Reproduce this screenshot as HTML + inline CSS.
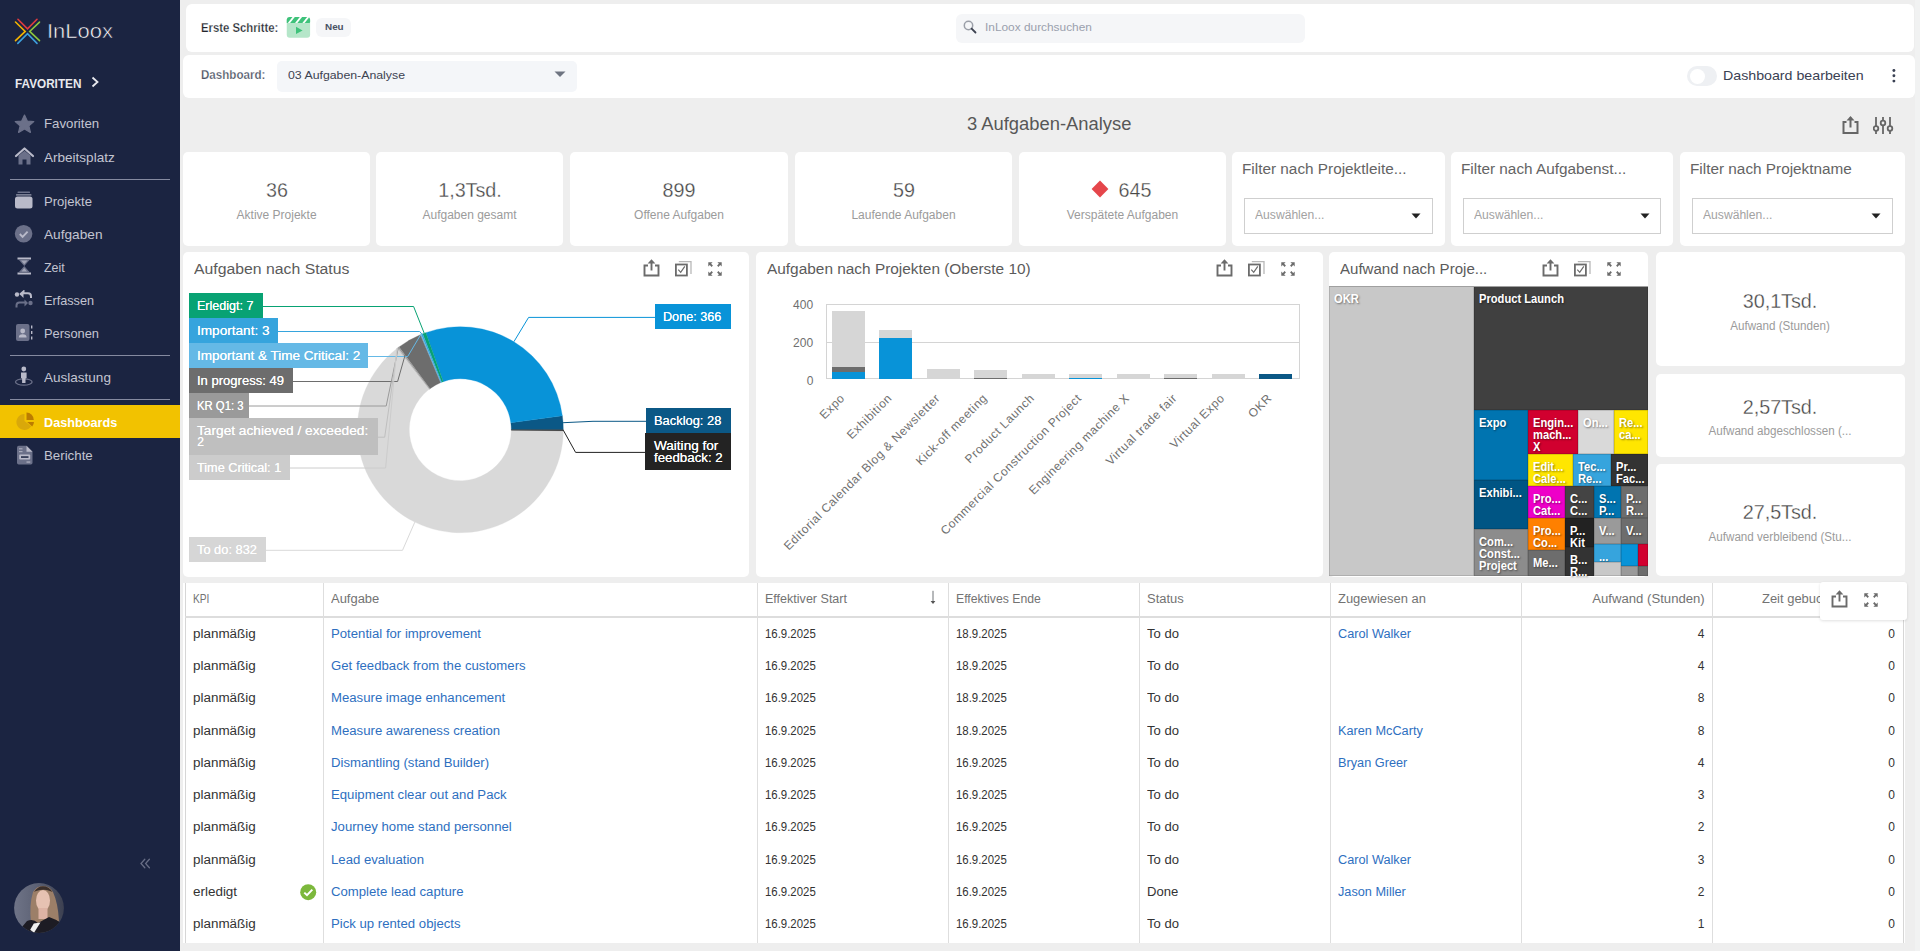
<!DOCTYPE html>
<html><head><meta charset="utf-8"><title>InLoox Dashboard</title>
<style>html,body{margin:0;padding:0;width:1920px;height:951px;overflow:hidden;background:#eeeeee;font-family:"Liberation Sans",sans-serif;}</style>
</head><body>
<div style="position:absolute;left:0px;top:0px;width:180px;height:951px;background:#1b2441;"></div>
<svg style="position:absolute;left:10px;top:14px;" width="36" height="36" viewBox="0 0 36 36"><g fill="none" stroke-width="1.6" stroke-linecap="round"><polyline points="7.95,5.3 17.5,14.8 27,5.3" stroke="#e23b3f"/><polyline points="5.5,8 15.2,17.4 5.5,26.7" stroke="#f4b400"/><polyline points="29.5,8.1 19.7,17.4 29.5,26.7" stroke="#8cc63e"/><polyline points="7.8,29.4 17.5,19.7 27,29.4" stroke="#3d9fdc"/></g></svg>
<div style="position:absolute;top:21.89px;font-family:'Liberation Sans', sans-serif;font-size:19.5px;line-height:19.5px;color:#ffffff;white-space:nowrap;left:46.5px;transform-origin:0 50%;transform:scaleX(1.1273);-webkit-text-stroke:0.55px #1b2441;">InLoox</div>
<div style="position:absolute;top:76.60px;font-family:'Liberation Sans', sans-serif;font-size:13px;line-height:13px;color:#e8e9ee;white-space:nowrap;font-weight:700;left:15px;transform-origin:0 50%;transform:scaleX(0.9042);">FAVORITEN</div>
<svg style="position:absolute;left:89px;top:76px;" width="12" height="12" viewBox="0 0 12 12"><polyline points="3.5,1.5 8.5,6 3.5,10.5" fill="none" stroke="#e8e9ee" stroke-width="1.8"/></svg>
<div style="position:absolute;top:117.30px;font-family:'Liberation Sans', sans-serif;font-size:13px;line-height:13px;color:#c3c5d1;white-space:nowrap;left:44.2px;transform-origin:0 50%;transform:scaleX(1.0186);">Favoriten</div>
<div style="position:absolute;top:150.50px;font-family:'Liberation Sans', sans-serif;font-size:13px;line-height:13px;color:#c3c5d1;white-space:nowrap;left:44.2px;transform-origin:0 50%;transform:scaleX(1.0409);">Arbeitsplatz</div>
<div style="position:absolute;top:195.00px;font-family:'Liberation Sans', sans-serif;font-size:13px;line-height:13px;color:#c3c5d1;white-space:nowrap;left:44.2px;transform-origin:0 50%;transform:scaleX(1.0065);">Projekte</div>
<div style="position:absolute;top:228.00px;font-family:'Liberation Sans', sans-serif;font-size:13px;line-height:13px;color:#c3c5d1;white-space:nowrap;left:44.2px;transform-origin:0 50%;transform:scaleX(1.0509);">Aufgaben</div>
<div style="position:absolute;top:261.30px;font-family:'Liberation Sans', sans-serif;font-size:13px;line-height:13px;color:#c3c5d1;white-space:nowrap;left:44.2px;transform-origin:0 50%;transform:scaleX(0.9552);">Zeit</div>
<div style="position:absolute;top:294.00px;font-family:'Liberation Sans', sans-serif;font-size:13px;line-height:13px;color:#c3c5d1;white-space:nowrap;left:44.2px;transform-origin:0 50%;transform:scaleX(0.9746);">Erfassen</div>
<div style="position:absolute;top:327.00px;font-family:'Liberation Sans', sans-serif;font-size:13px;line-height:13px;color:#c3c5d1;white-space:nowrap;left:44.2px;transform-origin:0 50%;transform:scaleX(0.9883);">Personen</div>
<div style="position:absolute;top:371.00px;font-family:'Liberation Sans', sans-serif;font-size:13px;line-height:13px;color:#c3c5d1;white-space:nowrap;left:44.2px;transform-origin:0 50%;transform:scaleX(1.0401);">Auslastung</div>
<div style="position:absolute;top:449.00px;font-family:'Liberation Sans', sans-serif;font-size:13px;line-height:13px;color:#c3c5d1;white-space:nowrap;left:44.2px;transform-origin:0 50%;transform:scaleX(1.0211);">Berichte</div>
<div style="position:absolute;left:10px;top:179px;width:160px;height:1px;background:#858aa0;"></div>
<div style="position:absolute;left:10px;top:355px;width:160px;height:1px;background:#858aa0;"></div>
<div style="position:absolute;left:10px;top:399px;width:160px;height:1px;background:#858aa0;"></div>
<div style="position:absolute;left:0px;top:405px;width:180px;height:33px;background:#f2c200;"></div>
<div style="position:absolute;top:415.50px;font-family:'Liberation Sans', sans-serif;font-size:13px;line-height:13px;color:#ffffff;white-space:nowrap;font-weight:700;left:44.2px;transform-origin:0 50%;transform:scaleX(0.9743);">Dashboards</div>
<svg style="position:absolute;left:14px;top:114px;" width="21" height="20" viewBox="0 0 21 20"><polygon points="10.5,1 13.3,7 19.8,7.6 14.9,11.9 16.4,18.4 10.5,15 4.6,18.4 6.1,11.9 1.2,7.6 7.7,7" fill="#6b7089" stroke="#6b7089" stroke-width="1.2" stroke-linejoin="round"/></svg>
<svg style="position:absolute;left:14px;top:147px;" width="21" height="19" viewBox="0 0 21 19"><path d="M2 9 L10.5 1.5 L19 9" fill="none" stroke="#b9bac9" stroke-width="2.2" stroke-linecap="round" stroke-linejoin="round"/><path d="M4.5 8.5 L10.5 3.8 L16.5 8.5 V17.5 H12.5 V12.5 H8.5 V17.5 H4.5 Z" fill="#6b7089"/></svg>
<svg style="position:absolute;left:14px;top:190px;" width="21" height="21" viewBox="0 0 21 21"><rect x="3.5" y="1.5" width="12.5" height="1.6" rx=".6" fill="#6b7089"/><rect x="2" y="4.3" width="15.5" height="1.2" rx=".5" fill="#b9bac9" opacity=".8"/><rect x="1" y="6.5" width="17.5" height="12" rx="2.5" fill="#b9bac9"/></svg>
<svg style="position:absolute;left:14px;top:224px;" width="21" height="20" viewBox="0 0 21 20"><circle cx="9.6" cy="9.8" r="8.8" fill="#6b7089"/><polyline points="5.8,10 8.6,12.8 13.6,7.6" fill="none" stroke="#b9bac9" stroke-width="1.9"/></svg>
<svg style="position:absolute;left:16px;top:257px;" width="18" height="19" viewBox="0 0 18 19"><rect x="1.5" y="0.5" width="13.5" height="2" fill="#b9bac9"/><rect x="1.5" y="15.5" width="13.5" height="2" fill="#b9bac9"/><path d="M3 3 H13.5 L8.25 9 Z M3 15 H13.5 L8.25 9 Z" fill="#6b7089"/><path d="M5 3.5 H11.5 L8.25 7.2 Z M5.5 14.5 H11 L8.25 11 Z" fill="#b9bac9" opacity=".7"/></svg>
<svg style="position:absolute;left:14px;top:290px;" width="20" height="20" viewBox="0 0 20 20"><circle cx="3" cy="4.5" r="2.2" fill="#b9bac9"/><path d="M6 4.5 L9.5 1.5 V3.3 H14 Q17 3.3 17 6.5 V8" fill="none" stroke="#b9bac9" stroke-width="2"/><path d="M9.5 1 L6 4.5 L9.5 8 Z" fill="#b9bac9"/><circle cx="16.5" cy="13" r="2.2" fill="#6b7089"/><path d="M2.5 17.5 V15.5 Q2.5 12.5 5.5 12.5 H11" fill="none" stroke="#6b7089" stroke-width="2"/><path d="M10.5 9.5 L14 13 L10.5 16.5 Z" fill="#6b7089"/></svg>
<svg style="position:absolute;left:15px;top:323px;" width="19" height="20" viewBox="0 0 19 20"><rect x="1" y="1" width="13.5" height="17" rx="2" fill="#6b7089"/><circle cx="7.7" cy="8" r="2.4" fill="#b9bac9"/><path d="M3.8 14.5 Q3.8 11.2 7.7 11.2 Q11.6 11.2 11.6 14.5 Z" fill="#b9bac9"/><rect x="16" y="2.5" width="1.4" height="3" fill="#b9bac9"/><rect x="16" y="8" width="1.4" height="3" fill="#b9bac9"/><rect x="16" y="13.5" width="1.4" height="3" fill="#b9bac9"/></svg>
<svg style="position:absolute;left:14px;top:366px;" width="20" height="21" viewBox="0 0 20 21"><ellipse cx="9.8" cy="16" rx="8.3" ry="3.2" fill="none" stroke="#6b7089" stroke-width="1.3"/><circle cx="9.8" cy="3" r="2.4" fill="#b9bac9"/><path d="M7 6.5 H12.6 V12 L11.5 12.5 V17 H8.1 V12.5 L7 12 Z" fill="#b9bac9"/></svg>
<svg style="position:absolute;left:15px;top:411px;" width="21" height="20" viewBox="0 0 21 20"><path d="M9.5 3 A8 8 0 1 0 16.2 15.2 L9.5 10 Z" fill="#d9a80a"/><path d="M11.5 1.5 A7.5 7.5 0 0 1 18.8 9 H11.5 Z" fill="#bb7c00"/><path d="M12.2 11 H19 A7.5 7.5 0 0 1 17.2 15.5 Z" fill="#bb7c00"/></svg>
<svg style="position:absolute;left:16px;top:445px;" width="18" height="21" viewBox="0 0 18 21"><path d="M1 2.5 Q1 0.8 2.7 0.8 H10.5 L16.5 6.8 V17.8 Q16.5 19.5 14.8 19.5 H2.7 Q1 19.5 1 17.8 Z" fill="#6b7089"/><path d="M10.5 0.8 L16.5 6.8 H10.5 Z" fill="#b9bac9"/><rect x="3" y="3.2" width="3.5" height="1.2" fill="#b9bac9" opacity=".8"/><rect x="3" y="6" width="3.5" height="1.2" fill="#b9bac9" opacity=".8"/><rect x="3.2" y="9.5" width="11" height="5" rx="1" fill="#b9bac9"/><rect x="5" y="11.3" width="7.5" height="1.5" fill="#1b2441"/><rect x="10.5" y="16.5" width="3.8" height="1.1" fill="#b9bac9"/></svg>
<svg style="position:absolute;left:138px;top:857px;" width="14" height="13" viewBox="0 0 14 13"><g fill="none" stroke="#676d85" stroke-width="1.3" stroke-linecap="round"><polyline points="6.8,2.3 3,6.5 6.8,10.7"/><polyline points="11.4,2.3 7.6,6.5 11.4,10.7"/></g></svg>
<svg style="position:absolute;left:14px;top:883px;" width="50" height="50" viewBox="0 0 50 50"><defs><clipPath id="av"><circle cx="25" cy="25" r="24.9"/></clipPath><linearGradient id="avg" x1="0" y1="0" x2="1" y2="0"><stop offset="0" stop-color="#6f7487"/><stop offset="0.45" stop-color="#5d6275"/><stop offset="1" stop-color="#3c4050"/></linearGradient></defs><g clip-path="url(#av)"><rect width="50" height="50" fill="url(#avg)"/><path d="M17 40 Q15 22 19 9 Q23 2.5 29 3 Q36 3 39 9 Q44 20 45 38 L38 40 L20 42 Z" fill="#9c7f68"/><path d="M20 9 Q24 3 29 3.2 Q35 3.2 38.5 9 L36 8 Q30 5.5 22 8 Z" fill="#3b2f2a"/><ellipse cx="29" cy="17.5" rx="7" ry="10.5" fill="#e6c2b2"/><rect x="24.5" y="25" width="9" height="11" fill="#ddb3a4"/><path d="M8 44 L13 38 Q19 35 24 40 L35 34 Q42 36 48 41 L50 50 L6 50 Z" fill="#1d1c24"/><polygon points="16.2,46.7 19.8,40.4 26.5,39.5 20,49.8" fill="#f0f0f0"/></g></svg>
<div style="position:absolute;left:186px;top:4px;width:1728px;height:47.5px;background:#ffffff;border-radius:6px;"></div>
<div style="position:absolute;top:21.84px;font-family:'Liberation Sans', sans-serif;font-size:12px;line-height:12px;color:#22252d;white-space:nowrap;font-weight:700;left:200.7px;transform-origin:0 50%;transform:scaleX(0.9424);-webkit-text-stroke:0.25px #fff;">Erste Schritte:</div>
<svg style="position:absolute;left:286px;top:16px;" width="26" height="23" viewBox="0 0 26 23"><defs><clipPath id="cl"><path d="M0.75 4 Q0.75 1 3.75 1 H21.1 Q24.1 1 24.1 4 V18.7 Q24.1 21.7 21.1 21.7 H3.75 Q0.75 21.7 0.75 18.7 Z"/></clipPath></defs><g clip-path="url(#cl)"><rect x="0" y="0" width="26" height="23" fill="#b5e6c9"/><rect x="0" y="0" width="26" height="6.9" fill="#ffffff"/><polygon points="1.50,1 6.50,1 1.75,6.9 -3.25,6.9" fill="#3ec27a"/><polygon points="8.80,1 13.80,1 9.05,6.9 4.05,6.9" fill="#3ec27a"/><polygon points="16.10,1 21.10,1 16.35,6.9 11.35,6.9" fill="#3ec27a"/><polygon points="23.40,1 28.40,1 23.65,6.9 18.65,6.9" fill="#3ec27a"/></g><polygon points="10,10.8 16.6,14.4 10,18" fill="#3ec27a"/></svg>
<div style="position:absolute;left:316.4px;top:18.1px;width:34.9px;height:18.6px;background:#f5f6f8;border-radius:6px;"></div>
<div style="position:absolute;top:22.30px;font-family:'Liberation Sans', sans-serif;font-size:9.8px;line-height:9.8px;color:#4a5265;white-space:nowrap;font-weight:700;left:324.75px;transform-origin:0 50%;transform:scaleX(1.0073);">Neu</div>
<div style="position:absolute;left:955.5px;top:13.5px;width:349.5px;height:29px;background:#f5f6f8;border-radius:6px;"></div>
<svg style="position:absolute;left:963px;top:20px;" width="14" height="14" viewBox="0 0 14 14"><circle cx="5.5" cy="5.5" r="4.2" fill="none" stroke="#9b9fa8" stroke-width="1.5"/><line x1="8.6" y1="8.6" x2="12.5" y2="12.5" stroke="#3d4250" stroke-width="1.8" stroke-linecap="round"/></svg>
<div style="position:absolute;top:21.99px;font-family:'Liberation Sans', sans-serif;font-size:11px;line-height:11px;color:#9aa0ad;white-space:nowrap;left:985px;transform-origin:0 50%;transform:scaleX(1.0790);">InLoox durchsuchen</div>
<div style="position:absolute;left:1915px;top:0px;width:5px;height:951px;background:#f1f2f2;"></div>
<div style="position:absolute;left:183.3px;top:55px;width:1731.5px;height:42.5px;background:#ffffff;border-radius:6px;"></div>
<div style="position:absolute;top:69.14px;font-family:'Liberation Sans', sans-serif;font-size:12px;line-height:12px;color:#4b5263;white-space:nowrap;font-weight:700;left:200.7px;transform-origin:0 50%;transform:scaleX(0.9659);-webkit-text-stroke:0.25px #fff;">Dashboard:</div>
<div style="position:absolute;left:277px;top:61px;width:300px;height:30.5px;background:#f4f6f9;border-radius:5px;"></div>
<div style="position:absolute;top:69.97px;font-family:'Liberation Sans', sans-serif;font-size:11.5px;line-height:11.5px;color:#3d4352;white-space:nowrap;left:288px;transform-origin:0 50%;transform:scaleX(1.0701);">03 Aufgaben-Analyse</div>
<svg style="position:absolute;left:554px;top:71px;" width="12" height="7" viewBox="0 0 12 7"><polygon points="0.5,0.5 11.5,0.5 6,6" fill="#6e7481"/></svg>
<div style="position:absolute;left:1687px;top:66.3px;width:30px;height:19.5px;background:#eef0f3;border-radius:10px;"></div>
<div style="position:absolute;left:1689.5px;top:68.5px;width:15px;height:15px;background:#ffffff;border-radius:50%;"></div>
<div style="position:absolute;top:69.00px;font-family:'Liberation Sans', sans-serif;font-size:13px;line-height:13px;color:#3a4153;white-space:nowrap;left:1723.4px;transform-origin:0 50%;transform:scaleX(1.0929);">Dashboard bearbeiten</div>
<svg style="position:absolute;left:1890px;top:66px;" width="8" height="20" viewBox="0 0 8 20"><g fill="#3a4153"><circle cx="3.9" cy="4.5" r="1.45"/><circle cx="3.9" cy="9.8" r="1.45"/><circle cx="3.9" cy="15.1" r="1.45"/></g></svg>
<div style="position:absolute;top:115.79px;font-family:'Liberation Sans', sans-serif;font-size:17.5px;line-height:17.5px;color:#575757;white-space:nowrap;left:966.6px;transform-origin:0 50%;transform:scaleX(1.0495);">3 Aufgaben-Analyse</div>
<svg style="position:absolute;left:1841px;top:115px;" width="20" height="20" viewBox="0 0 20 20"><path d="M5.5 7 H2.5 V18 H16.5 V7 H13.5" fill="none" stroke="#666" stroke-width="2"/><line x1="9.5" y1="2.5" x2="9.5" y2="12.5" stroke="#666" stroke-width="2"/><polygon points="9.5,1 5.5,5.5 13.5,5.5" fill="#666"/></svg>
<svg style="position:absolute;left:1873px;top:116px;" width="21" height="19" viewBox="0 0 21 19"><g stroke="#666" stroke-width="1.8" fill="#eeeeee"><line x1="3" y1="1" x2="3" y2="18"/><line x1="10" y1="1" x2="10" y2="18"/><line x1="17" y1="1" x2="17" y2="18"/><circle cx="3" cy="12.5" r="2.3"/><circle cx="10" cy="7" r="2.3"/><circle cx="17" cy="12.5" r="2.3"/></g></svg>
<div style="position:absolute;left:183.2px;top:152px;width:186.8px;height:93.5px;background:#ffffff;border-radius:5px;"></div>
<div style="position:absolute;top:179.22px;font-family:'Liberation Sans', sans-serif;font-size:21px;line-height:21px;color:#474747;white-space:nowrap;left:276.6px;transform:translateX(-50%) scaleX(0.9400);-webkit-text-stroke:0.3px #fff;">36</div>
<div style="position:absolute;top:208.84px;font-family:'Liberation Sans', sans-serif;font-size:12px;line-height:12px;color:#9b9b9b;white-space:nowrap;left:276.6px;transform:translateX(-50%);">Aktive Projekte</div>
<div style="position:absolute;left:376px;top:152px;width:187px;height:93.5px;background:#ffffff;border-radius:5px;"></div>
<div style="position:absolute;top:179.22px;font-family:'Liberation Sans', sans-serif;font-size:21px;line-height:21px;color:#474747;white-space:nowrap;left:469.5px;transform:translateX(-50%) scaleX(0.9400);-webkit-text-stroke:0.3px #fff;">1,3Tsd.</div>
<div style="position:absolute;top:208.84px;font-family:'Liberation Sans', sans-serif;font-size:12px;line-height:12px;color:#9b9b9b;white-space:nowrap;left:469.5px;transform:translateX(-50%);">Aufgaben gesamt</div>
<div style="position:absolute;left:570px;top:152px;width:218px;height:93.5px;background:#ffffff;border-radius:5px;"></div>
<div style="position:absolute;top:179.22px;font-family:'Liberation Sans', sans-serif;font-size:21px;line-height:21px;color:#474747;white-space:nowrap;left:679.0px;transform:translateX(-50%) scaleX(0.9400);-webkit-text-stroke:0.3px #fff;">899</div>
<div style="position:absolute;top:208.84px;font-family:'Liberation Sans', sans-serif;font-size:12px;line-height:12px;color:#9b9b9b;white-space:nowrap;left:679.0px;transform:translateX(-50%);">Offene Aufgaben</div>
<div style="position:absolute;left:795px;top:152px;width:217px;height:93.5px;background:#ffffff;border-radius:5px;"></div>
<div style="position:absolute;top:179.22px;font-family:'Liberation Sans', sans-serif;font-size:21px;line-height:21px;color:#474747;white-space:nowrap;left:903.5px;transform:translateX(-50%) scaleX(0.9400);-webkit-text-stroke:0.3px #fff;">59</div>
<div style="position:absolute;top:208.84px;font-family:'Liberation Sans', sans-serif;font-size:12px;line-height:12px;color:#9b9b9b;white-space:nowrap;left:903.5px;transform:translateX(-50%);">Laufende Aufgaben</div>
<div style="position:absolute;left:1019px;top:152px;width:207px;height:93.5px;background:#ffffff;border-radius:5px;"></div>
<div style="position:absolute;top:179.22px;font-family:'Liberation Sans', sans-serif;font-size:21px;line-height:21px;color:#474747;white-space:nowrap;left:1134.8px;transform:translateX(-50%) scaleX(0.9400);-webkit-text-stroke:0.3px #fff;">645</div>
<svg style="position:absolute;left:1091px;top:180px;" width="18" height="18" viewBox="0 0 18 18"><polygon points="9,0.6 17.4,9 9,17.4 0.6,9" fill="#e5464b"/></svg>
<div style="position:absolute;top:208.84px;font-family:'Liberation Sans', sans-serif;font-size:12px;line-height:12px;color:#9b9b9b;white-space:nowrap;left:1122.5px;transform:translateX(-50%);">Verspätete Aufgaben</div>
<div style="position:absolute;left:1232px;top:152.2px;width:212.70000000000005px;height:93.8px;background:#ffffff;border-radius:5px;"></div>
<div style="position:absolute;top:162.15px;font-family:'Liberation Sans', sans-serif;font-size:14px;line-height:14px;color:#646464;white-space:nowrap;left:1242px;transform-origin:0 50%;transform:scaleX(1.0950);">Filter nach Projektleite...</div>
<div style="position:absolute;left:1244px;top:198.3px;width:188.70000000000005px;height:35.8px;background:#ffffff;border:1px solid #cfcfcf;box-sizing:border-box;"></div>
<div style="position:absolute;top:209.24px;font-family:'Liberation Sans', sans-serif;font-size:12px;line-height:12px;color:#a2a2a2;white-space:nowrap;left:1255px;transform-origin:0 50%;transform:scaleX(1.0101);">Auswählen...</div>
<svg style="position:absolute;left:1411.2px;top:212.5px;" width="10" height="6" viewBox="0 0 10 6"><polygon points="0.5,0.5 9.5,0.5 5,5.5" fill="#222"/></svg>
<div style="position:absolute;left:1451px;top:152.2px;width:222.4000000000001px;height:93.8px;background:#ffffff;border-radius:5px;"></div>
<div style="position:absolute;top:162.15px;font-family:'Liberation Sans', sans-serif;font-size:14px;line-height:14px;color:#646464;white-space:nowrap;left:1461px;transform-origin:0 50%;transform:scaleX(1.0950);">Filter nach Aufgabenst...</div>
<div style="position:absolute;left:1463px;top:198.3px;width:198.4000000000001px;height:35.8px;background:#ffffff;border:1px solid #cfcfcf;box-sizing:border-box;"></div>
<div style="position:absolute;top:209.24px;font-family:'Liberation Sans', sans-serif;font-size:12px;line-height:12px;color:#a2a2a2;white-space:nowrap;left:1474px;transform-origin:0 50%;transform:scaleX(1.0101);">Auswählen...</div>
<svg style="position:absolute;left:1639.9px;top:212.5px;" width="10" height="6" viewBox="0 0 10 6"><polygon points="0.5,0.5 9.5,0.5 5,5.5" fill="#222"/></svg>
<div style="position:absolute;left:1680px;top:152.2px;width:224.79999999999995px;height:93.8px;background:#ffffff;border-radius:5px;"></div>
<div style="position:absolute;top:162.15px;font-family:'Liberation Sans', sans-serif;font-size:14px;line-height:14px;color:#646464;white-space:nowrap;left:1690px;transform-origin:0 50%;transform:scaleX(1.0950);">Filter nach Projektname</div>
<div style="position:absolute;left:1692px;top:198.3px;width:200.79999999999995px;height:35.8px;background:#ffffff;border:1px solid #cfcfcf;box-sizing:border-box;"></div>
<div style="position:absolute;top:209.24px;font-family:'Liberation Sans', sans-serif;font-size:12px;line-height:12px;color:#a2a2a2;white-space:nowrap;left:1703px;transform-origin:0 50%;transform:scaleX(1.0101);">Auswählen...</div>
<svg style="position:absolute;left:1871.3px;top:212.5px;" width="10" height="6" viewBox="0 0 10 6"><polygon points="0.5,0.5 9.5,0.5 5,5.5" fill="#222"/></svg>
<div style="position:absolute;left:183.2px;top:252px;width:566.3px;height:324.5px;background:#ffffff;border-radius:5px;"></div>
<div style="position:absolute;top:261.95px;font-family:'Liberation Sans', sans-serif;font-size:14px;line-height:14px;color:#5b5b5b;white-space:nowrap;left:194px;transform-origin:0 50%;transform:scaleX(1.1279);">Aufgaben nach Status</div>
<svg style="position:absolute;left:642.5px;top:258.7px;" width="17" height="18" viewBox="0 0 17 18"><path d="M5 6.5 H1.5 V16.5 H15.5 V6.5 H12" fill="none" stroke="#6b6b6b" stroke-width="1.9"/><line x1="8.5" y1="3" x2="8.5" y2="11.5" stroke="#6b6b6b" stroke-width="1.9"/><polygon points="8.5,0.3 4.6,4.6 12.4,4.6" fill="#6b6b6b"/></svg>
<svg style="position:absolute;left:674.5px;top:260.0px;" width="18" height="17" viewBox="0 0 18 17"><path d="M3.8 1.6 H16 V14" fill="none" stroke="#b8b8b8" stroke-width="1.3"/><rect x="0.9" y="4.5" width="11" height="11" fill="none" stroke="#6b6b6b" stroke-width="1.8"/><polyline points="3.3,9.6 5.7,12.3 9.8,6.3" fill="none" stroke="#6b6b6b" stroke-width="1.2"/></svg>
<svg style="position:absolute;left:707.5px;top:261.8px;" width="15" height="15" viewBox="0 0 15 15"><g fill="#6b6b6b"><polygon points="0.3,0.3 4.6,0.3 3.1,1.8 4.9,3.6 3.6,4.9 1.8,3.1 0.3,4.6"/><polygon points="13.7,0.3 9.4,0.3 10.9,1.8 9.1,3.6 10.4,4.9 12.2,3.1 13.7,4.6"/><polygon points="0.3,13.7 4.6,13.7 3.1,12.2 4.9,10.4 3.6,9.1 1.8,10.9 0.3,9.4"/><polygon points="13.7,13.7 9.4,13.7 10.9,12.2 9.1,10.4 10.4,9.1 12.2,10.9 13.7,9.4"/></g></svg>
<svg style="position:absolute;left:183px;top:252px;" width="566" height="324" viewBox="0 0 566 324"><path d="M380.30,177.70 A103,103 0 0 0 379.35,163.75 L327.83,170.79 A51,51 0 0 1 328.30,177.70 Z" fill="#0b5886" stroke="#0b5886" stroke-width="0.3"/><path d="M379.35,163.75 A103,103 0 0 0 242.87,80.63 L260.25,129.63 A51,51 0 0 1 327.83,170.79 Z" fill="#0893d8" stroke="#0893d8" stroke-width="0.3"/><path d="M242.87,80.63 A103,103 0 0 0 239.59,81.85 L258.63,130.24 A51,51 0 0 1 260.25,129.63 Z" fill="#08a273" stroke="#08a273" stroke-width="0.3"/><path d="M239.59,81.85 A103,103 0 0 0 238.20,82.41 L257.94,130.52 A51,51 0 0 1 258.63,130.24 Z" fill="#36a4dd" stroke="#36a4dd" stroke-width="0.3"/><path d="M238.20,82.41 A103,103 0 0 0 237.28,82.79 L257.48,130.71 A51,51 0 0 1 257.94,130.52 Z" fill="#65b9e6" stroke="#65b9e6" stroke-width="0.3"/><path d="M237.28,82.79 A103,103 0 0 0 216.05,94.89 L246.97,136.70 A51,51 0 0 1 257.48,130.71 Z" fill="#6d6d6d" stroke="#6d6d6d" stroke-width="0.3"/><path d="M216.05,94.89 A103,103 0 0 0 214.85,95.79 L246.38,137.14 A51,51 0 0 1 246.97,136.70 Z" fill="#9a9a9a" stroke="#9a9a9a" stroke-width="0.3"/><path d="M214.85,95.79 A103,103 0 0 0 214.06,96.40 L245.99,137.44 A51,51 0 0 1 246.38,137.14 Z" fill="#bfbfbf" stroke="#bfbfbf" stroke-width="0.3"/><path d="M214.06,96.40 A103,103 0 0 0 213.67,96.71 L245.79,137.60 A51,51 0 0 1 245.99,137.44 Z" fill="#cccccc" stroke="#cccccc" stroke-width="0.3"/><path d="M213.67,96.71 A103,103 0 1 0 380.30,178.70 L328.30,178.19 A51,51 0 1 1 245.79,137.60 Z" fill="#d9d9d9" stroke="#d9d9d9" stroke-width="0.3"/><path d="M380.30,178.70 A103,103 0 0 0 380.30,177.70 L328.30,177.70 A51,51 0 0 1 328.30,178.19 Z" fill="#222222" stroke="#222222" stroke-width="0.3"/><polyline points="79.70,54.50 230.60,54.50 241.23,81.22" fill="none" stroke="#08a273" stroke-width="1"/><polyline points="94.70,79.50 236.70,79.50 238.90,82.13" fill="none" stroke="#36a4dd" stroke-width="1"/><polyline points="184.80,104.50 224.70,104.50 237.74,82.60" fill="none" stroke="#65b9e6" stroke-width="1"/><polyline points="110.00,129.50 214.60,129.50 226.31,88.21" fill="none" stroke="#6d6d6d" stroke-width="1"/><polyline points="65.80,154.00 203.20,154.00 215.45,95.34" fill="none" stroke="#9a9a9a" stroke-width="1"/><polyline points="194.80,185.20 201.70,185.20 214.46,96.09" fill="none" stroke="#bfbfbf" stroke-width="1"/><polyline points="106.70,216.00 202.60,216.00 213.86,96.55" fill="none" stroke="#cccccc" stroke-width="1"/><polyline points="82.80,298.30 219.50,298.30 231.82,270.12" fill="none" stroke="#d9d9d9" stroke-width="1"/><polyline points="472.00,65.40 345.60,65.40 330.88,89.73" fill="none" stroke="#0893d8" stroke-width="1"/><polyline points="463.00,169.30 410.00,169.30 380.06,170.71" fill="none" stroke="#0b5886" stroke-width="1"/><polyline points="462.00,200.40 392.60,200.40 380.30,178.20" fill="none" stroke="#222222" stroke-width="1"/></svg>
<div style="position:absolute;left:189px;top:293px;width:73.7px;height:25px;background:#08a273;"></div>
<div style="position:absolute;top:300.14px;font-family:'Liberation Sans', sans-serif;font-size:12px;line-height:12px;color:#ffffff;white-space:nowrap;left:197.3px;transform-origin:0 50%;transform:scaleX(1.0457);text-shadow:0 0 0.5px #fff;">Erledigt: 7</div>
<div style="position:absolute;left:189px;top:317.7px;width:88.7px;height:25px;background:#36a4dd;"></div>
<div style="position:absolute;top:324.84px;font-family:'Liberation Sans', sans-serif;font-size:12px;line-height:12px;color:#ffffff;white-space:nowrap;left:197.3px;transform-origin:0 50%;transform:scaleX(1.1338);text-shadow:0 0 0.5px #fff;">Important: 3</div>
<div style="position:absolute;left:189px;top:342.7px;width:178.8px;height:25px;background:#65b9e6;"></div>
<div style="position:absolute;top:349.84px;font-family:'Liberation Sans', sans-serif;font-size:12px;line-height:12px;color:#ffffff;white-space:nowrap;left:197.3px;transform-origin:0 50%;transform:scaleX(1.1278);text-shadow:0 0 0.5px #fff;">Important &amp; Time Critical: 2</div>
<div style="position:absolute;left:189px;top:367.8px;width:104px;height:25px;background:#6d6d6d;"></div>
<div style="position:absolute;top:374.94px;font-family:'Liberation Sans', sans-serif;font-size:12px;line-height:12px;color:#ffffff;white-space:nowrap;left:197.3px;transform-origin:0 50%;transform:scaleX(1.0856);text-shadow:0 0 0.5px #fff;">In progress: 49</div>
<div style="position:absolute;left:189px;top:392.8px;width:59.8px;height:25px;background:#9a9a9a;"></div>
<div style="position:absolute;top:399.94px;font-family:'Liberation Sans', sans-serif;font-size:12px;line-height:12px;color:#ffffff;white-space:nowrap;left:197.3px;transform-origin:0 50%;transform:scaleX(0.9422);text-shadow:0 0 0.5px #fff;">KR Q1: 3</div>
<div style="position:absolute;left:189px;top:455px;width:100.7px;height:24.7px;background:#cccccc;"></div>
<div style="position:absolute;top:462.14px;font-family:'Liberation Sans', sans-serif;font-size:12px;line-height:12px;color:#ffffff;white-space:nowrap;left:197.3px;transform-origin:0 50%;transform:scaleX(1.0582);text-shadow:0 0 0.5px #fff;">Time Critical: 1</div>
<div style="position:absolute;left:189px;top:537px;width:76.8px;height:24.5px;background:#d6d6d6;"></div>
<div style="position:absolute;top:544.14px;font-family:'Liberation Sans', sans-serif;font-size:12px;line-height:12px;color:#ffffff;white-space:nowrap;left:197.3px;transform-origin:0 50%;transform:scaleX(1.0688);text-shadow:0 0 0.5px #fff;">To do: 832</div>
<div style="position:absolute;left:655px;top:304px;width:76px;height:24.8px;background:#0893d8;"></div>
<div style="position:absolute;top:311.14px;font-family:'Liberation Sans', sans-serif;font-size:12px;line-height:12px;color:#ffffff;white-space:nowrap;left:663.3px;transform-origin:0 50%;transform:scaleX(1.0528);text-shadow:0 0 0.5px #fff;">Done: 366</div>
<div style="position:absolute;left:646px;top:408.2px;width:85px;height:24.8px;background:#0b5886;"></div>
<div style="position:absolute;top:415.34px;font-family:'Liberation Sans', sans-serif;font-size:12px;line-height:12px;color:#ffffff;white-space:nowrap;left:654.3px;transform-origin:0 50%;transform:scaleX(1.0732);text-shadow:0 0 0.5px #fff;">Backlog: 28</div>
<div style="position:absolute;left:189px;top:418px;width:188.8px;height:36.7px;background:#bfbfbf;"></div>
<div style="position:absolute;top:424.84px;font-family:'Liberation Sans', sans-serif;font-size:12px;line-height:12px;color:#ffffff;white-space:nowrap;left:197.3px;transform-origin:0 50%;transform:scaleX(1.1406);text-shadow:0 0 0.5px #fff;">Target achieved / exceeded:</div>
<div style="position:absolute;top:436.44px;font-family:'Liberation Sans', sans-serif;font-size:12px;line-height:12px;color:#ffffff;white-space:nowrap;left:197.3px;text-shadow:0 0 0.5px #fff;">2</div>
<div style="position:absolute;left:645px;top:433px;width:86px;height:37px;background:#232323;"></div>
<div style="position:absolute;top:440.34px;font-family:'Liberation Sans', sans-serif;font-size:12px;line-height:12px;color:#ffffff;white-space:nowrap;left:653.5px;transform-origin:0 50%;transform:scaleX(1.1299);text-shadow:0 0 0.5px #fff;">Waiting for</div>
<div style="position:absolute;top:451.84px;font-family:'Liberation Sans', sans-serif;font-size:12px;line-height:12px;color:#ffffff;white-space:nowrap;left:653.5px;transform-origin:0 50%;transform:scaleX(1.1072);text-shadow:0 0 0.5px #fff;">feedback: 2</div>
<div style="position:absolute;left:756px;top:252px;width:566.8px;height:324.5px;background:#ffffff;border-radius:5px;"></div>
<div style="position:absolute;top:261.95px;font-family:'Liberation Sans', sans-serif;font-size:14px;line-height:14px;color:#5b5b5b;white-space:nowrap;left:766.6px;transform-origin:0 50%;transform:scaleX(1.1001);">Aufgaben nach Projekten (Oberste 10)</div>
<svg style="position:absolute;left:1215.5px;top:258.7px;" width="17" height="18" viewBox="0 0 17 18"><path d="M5 6.5 H1.5 V16.5 H15.5 V6.5 H12" fill="none" stroke="#6b6b6b" stroke-width="1.9"/><line x1="8.5" y1="3" x2="8.5" y2="11.5" stroke="#6b6b6b" stroke-width="1.9"/><polygon points="8.5,0.3 4.6,4.6 12.4,4.6" fill="#6b6b6b"/></svg>
<svg style="position:absolute;left:1247.5px;top:260.0px;" width="18" height="17" viewBox="0 0 18 17"><path d="M3.8 1.6 H16 V14" fill="none" stroke="#b8b8b8" stroke-width="1.3"/><rect x="0.9" y="4.5" width="11" height="11" fill="none" stroke="#6b6b6b" stroke-width="1.8"/><polyline points="3.3,9.6 5.7,12.3 9.8,6.3" fill="none" stroke="#6b6b6b" stroke-width="1.2"/></svg>
<svg style="position:absolute;left:1280.5px;top:261.8px;" width="15" height="15" viewBox="0 0 15 15"><g fill="#6b6b6b"><polygon points="0.3,0.3 4.6,0.3 3.1,1.8 4.9,3.6 3.6,4.9 1.8,3.1 0.3,4.6"/><polygon points="13.7,0.3 9.4,0.3 10.9,1.8 9.1,3.6 10.4,4.9 12.2,3.1 13.7,4.6"/><polygon points="0.3,13.7 4.6,13.7 3.1,12.2 4.9,10.4 3.6,9.1 1.8,10.9 0.3,9.4"/><polygon points="13.7,13.7 9.4,13.7 10.9,12.2 9.1,10.4 10.4,9.1 12.2,10.9 13.7,9.4"/></g></svg>
<div style="position:absolute;left:825.6px;top:304.2px;width:473.9999999999999px;height:74.80000000000001px;background:transparent;border:1px solid #d4d4d4;box-sizing:border-box;"></div>
<div style="position:absolute;left:825.6px;top:342.2px;width:473.9999999999999px;height:1px;background:#d4d4d4;"></div>
<div style="position:absolute;top:298.84px;font-family:'Liberation Sans', sans-serif;font-size:12px;line-height:12px;color:#6f6f6f;white-space:nowrap;letter-spacing:0.2px;right:1106.5px;">400</div>
<div style="position:absolute;top:337.34px;font-family:'Liberation Sans', sans-serif;font-size:12px;line-height:12px;color:#6f6f6f;white-space:nowrap;letter-spacing:0.2px;right:1106.5px;">200</div>
<div style="position:absolute;top:375.14px;font-family:'Liberation Sans', sans-serif;font-size:12px;line-height:12px;color:#6f6f6f;white-space:nowrap;letter-spacing:0.2px;right:1106.5px;">0</div>
<div style="position:absolute;left:832.2px;top:371.6995px;width:33px;height:6.9005px;background:#0893d8;"></div>
<div style="position:absolute;left:832.2px;top:366.664px;width:33px;height:5.0355px;background:#6d6d6d;"></div>
<div style="position:absolute;left:832.2px;top:310.5275px;width:33px;height:56.1365px;background:#d6d6d6;"></div>
<div style="position:absolute;left:879.3px;top:338.31600000000003px;width:33px;height:40.284px;background:#0893d8;"></div>
<div style="position:absolute;left:879.3px;top:329.55050000000006px;width:33px;height:8.7655px;background:#d6d6d6;"></div>
<div style="position:absolute;left:927px;top:368.529px;width:33px;height:10.071px;background:#d6d6d6;"></div>
<div style="position:absolute;left:974.2px;top:378.13375px;width:33px;height:0.46625px;background:#6d6d6d;"></div>
<div style="position:absolute;left:974.2px;top:369.648px;width:33px;height:8.48575px;background:#d6d6d6;"></div>
<div style="position:absolute;left:1022px;top:373.5645px;width:33px;height:5.0355px;background:#d6d6d6;"></div>
<div style="position:absolute;left:1069px;top:378.22700000000003px;width:33px;height:0.373px;background:#0893d8;"></div>
<div style="position:absolute;left:1069px;top:373.5645px;width:33px;height:4.6625px;background:#d6d6d6;"></div>
<div style="position:absolute;left:1117px;top:373.5645px;width:33px;height:5.0355px;background:#d6d6d6;"></div>
<div style="position:absolute;left:1164px;top:378.13375px;width:33px;height:0.46625px;background:#6d6d6d;"></div>
<div style="position:absolute;left:1164px;top:374.124px;width:33px;height:4.00975px;background:#d6d6d6;"></div>
<div style="position:absolute;left:1212px;top:374.497px;width:33px;height:4.103px;background:#d6d6d6;"></div>
<div style="position:absolute;left:1259px;top:374.31050000000005px;width:33px;height:4.2895px;background:#0b5886;"></div>
<div style="position:absolute;right:1077.3px;top:390.0px;font-family:'Liberation Sans', sans-serif;font-size:12px;line-height:12px;color:#6f6f6f;letter-spacing:0.58px;white-space:nowrap;transform-origin:100% 50%;transform:rotate(-45deg);">Expo</div>
<div style="position:absolute;right:1030.2px;top:390.0px;font-family:'Liberation Sans', sans-serif;font-size:12px;line-height:12px;color:#6f6f6f;letter-spacing:0.58px;white-space:nowrap;transform-origin:100% 50%;transform:rotate(-45deg);">Exhibition</div>
<div style="position:absolute;right:982.5px;top:390.0px;font-family:'Liberation Sans', sans-serif;font-size:12px;line-height:12px;color:#6f6f6f;letter-spacing:0.58px;white-space:nowrap;transform-origin:100% 50%;transform:rotate(-45deg);">Editorial Calendar Blog &amp; Newsletter</div>
<div style="position:absolute;right:935.3px;top:390.0px;font-family:'Liberation Sans', sans-serif;font-size:12px;line-height:12px;color:#6f6f6f;letter-spacing:0.58px;white-space:nowrap;transform-origin:100% 50%;transform:rotate(-45deg);">Kick-off meeting</div>
<div style="position:absolute;right:887.5px;top:390.0px;font-family:'Liberation Sans', sans-serif;font-size:12px;line-height:12px;color:#6f6f6f;letter-spacing:0.58px;white-space:nowrap;transform-origin:100% 50%;transform:rotate(-45deg);">Product Launch</div>
<div style="position:absolute;right:840.5px;top:390.0px;font-family:'Liberation Sans', sans-serif;font-size:12px;line-height:12px;color:#6f6f6f;letter-spacing:0.58px;white-space:nowrap;transform-origin:100% 50%;transform:rotate(-45deg);">Commercial Construction Project</div>
<div style="position:absolute;right:792.5px;top:390.0px;font-family:'Liberation Sans', sans-serif;font-size:12px;line-height:12px;color:#6f6f6f;letter-spacing:0.58px;white-space:nowrap;transform-origin:100% 50%;transform:rotate(-45deg);">Engineering machine X</div>
<div style="position:absolute;right:745.5px;top:390.0px;font-family:'Liberation Sans', sans-serif;font-size:12px;line-height:12px;color:#6f6f6f;letter-spacing:0.58px;white-space:nowrap;transform-origin:100% 50%;transform:rotate(-45deg);">Virtual trade fair</div>
<div style="position:absolute;right:697.5px;top:390.0px;font-family:'Liberation Sans', sans-serif;font-size:12px;line-height:12px;color:#6f6f6f;letter-spacing:0.58px;white-space:nowrap;transform-origin:100% 50%;transform:rotate(-45deg);">Virtual Expo</div>
<div style="position:absolute;right:650.5px;top:390.0px;font-family:'Liberation Sans', sans-serif;font-size:12px;line-height:12px;color:#6f6f6f;letter-spacing:0.58px;white-space:nowrap;transform-origin:100% 50%;transform:rotate(-45deg);">OKR</div>
<div style="position:absolute;left:1329.2px;top:252px;width:319.3px;height:324.5px;background:#ffffff;border-radius:5px;"></div>
<div style="position:absolute;top:262.05px;font-family:'Liberation Sans', sans-serif;font-size:14px;line-height:14px;color:#5b5b5b;white-space:nowrap;left:1339.5px;transform-origin:0 50%;transform:scaleX(1.0754);">Aufwand nach Proje...</div>
<svg style="position:absolute;left:1541.5px;top:258.7px;" width="17" height="18" viewBox="0 0 17 18"><path d="M5 6.5 H1.5 V16.5 H15.5 V6.5 H12" fill="none" stroke="#6b6b6b" stroke-width="1.9"/><line x1="8.5" y1="3" x2="8.5" y2="11.5" stroke="#6b6b6b" stroke-width="1.9"/><polygon points="8.5,0.3 4.6,4.6 12.4,4.6" fill="#6b6b6b"/></svg>
<svg style="position:absolute;left:1573.5px;top:260.0px;" width="18" height="17" viewBox="0 0 18 17"><path d="M3.8 1.6 H16 V14" fill="none" stroke="#b8b8b8" stroke-width="1.3"/><rect x="0.9" y="4.5" width="11" height="11" fill="none" stroke="#6b6b6b" stroke-width="1.8"/><polyline points="3.3,9.6 5.7,12.3 9.8,6.3" fill="none" stroke="#6b6b6b" stroke-width="1.2"/></svg>
<svg style="position:absolute;left:1606.5px;top:261.8px;" width="15" height="15" viewBox="0 0 15 15"><g fill="#6b6b6b"><polygon points="0.3,0.3 4.6,0.3 3.1,1.8 4.9,3.6 3.6,4.9 1.8,3.1 0.3,4.6"/><polygon points="13.7,0.3 9.4,0.3 10.9,1.8 9.1,3.6 10.4,4.9 12.2,3.1 13.7,4.6"/><polygon points="0.3,13.7 4.6,13.7 3.1,12.2 4.9,10.4 3.6,9.1 1.8,10.9 0.3,9.4"/><polygon points="13.7,13.7 9.4,13.7 10.9,12.2 9.1,10.4 10.4,9.1 12.2,10.9 13.7,9.4"/></g></svg>
<div style="position:absolute;left:1329px;top:286px;width:145px;height:290px;background:#c8c8c8;box-shadow:inset 0 0 0 0.5px rgba(0,0,0,0.25);"></div>
<div style="position:absolute;top:293.04px;font-family:'Liberation Sans', sans-serif;font-size:12px;line-height:12px;color:#ffffff;white-space:nowrap;font-weight:700;left:1334px;transform-origin:0 50%;transform:scaleX(0.9300);text-shadow:1px 1px 2px rgba(0,0,0,0.45);">OKR</div>
<div style="position:absolute;left:1474px;top:286px;width:174px;height:124px;background:#404040;box-shadow:inset 0 0 0 0.5px rgba(0,0,0,0.25);"></div>
<div style="position:absolute;top:293.04px;font-family:'Liberation Sans', sans-serif;font-size:12px;line-height:12px;color:#ffffff;white-space:nowrap;font-weight:700;left:1479px;transform-origin:0 50%;transform:scaleX(0.9300);text-shadow:1px 1px 2px rgba(0,0,0,0.45);">Product Launch</div>
<div style="position:absolute;left:1474px;top:410px;width:54px;height:70px;background:#0074b0;box-shadow:inset 0 0 0 0.5px rgba(0,0,0,0.25);"></div>
<div style="position:absolute;top:417.04px;font-family:'Liberation Sans', sans-serif;font-size:12px;line-height:12px;color:#ffffff;white-space:nowrap;font-weight:700;left:1479px;transform-origin:0 50%;transform:scaleX(0.9300);text-shadow:1px 1px 2px rgba(0,0,0,0.45);">Expo</div>
<div style="position:absolute;left:1474px;top:480px;width:54px;height:49px;background:#005584;box-shadow:inset 0 0 0 0.5px rgba(0,0,0,0.25);"></div>
<div style="position:absolute;top:487.04px;font-family:'Liberation Sans', sans-serif;font-size:12px;line-height:12px;color:#ffffff;white-space:nowrap;font-weight:700;left:1479px;transform-origin:0 50%;transform:scaleX(0.9300);text-shadow:1px 1px 2px rgba(0,0,0,0.45);">Exhibi...</div>
<div style="position:absolute;left:1474px;top:529px;width:54px;height:47px;background:#8c8c8c;box-shadow:inset 0 0 0 0.5px rgba(0,0,0,0.25);"></div>
<div style="position:absolute;top:536.04px;font-family:'Liberation Sans', sans-serif;font-size:12px;line-height:12px;color:#ffffff;white-space:nowrap;font-weight:700;left:1479px;transform-origin:0 50%;transform:scaleX(0.9300);text-shadow:1px 1px 2px rgba(0,0,0,0.45);">Com...</div>
<div style="position:absolute;top:547.84px;font-family:'Liberation Sans', sans-serif;font-size:12px;line-height:12px;color:#ffffff;white-space:nowrap;font-weight:700;left:1479px;transform-origin:0 50%;transform:scaleX(0.9300);text-shadow:1px 1px 2px rgba(0,0,0,0.45);">Const...</div>
<div style="position:absolute;top:559.64px;font-family:'Liberation Sans', sans-serif;font-size:12px;line-height:12px;color:#ffffff;white-space:nowrap;font-weight:700;left:1479px;transform-origin:0 50%;transform:scaleX(0.9300);text-shadow:1px 1px 2px rgba(0,0,0,0.45);">Project</div>
<div style="position:absolute;left:1528px;top:410px;width:50px;height:44px;background:#d1002f;box-shadow:inset 0 0 0 0.5px rgba(0,0,0,0.25);"></div>
<div style="position:absolute;top:417.04px;font-family:'Liberation Sans', sans-serif;font-size:12px;line-height:12px;color:#ffffff;white-space:nowrap;font-weight:700;left:1533px;transform-origin:0 50%;transform:scaleX(0.9300);text-shadow:1px 1px 2px rgba(0,0,0,0.45);">Engin...</div>
<div style="position:absolute;top:428.84px;font-family:'Liberation Sans', sans-serif;font-size:12px;line-height:12px;color:#ffffff;white-space:nowrap;font-weight:700;left:1533px;transform-origin:0 50%;transform:scaleX(0.9300);text-shadow:1px 1px 2px rgba(0,0,0,0.45);">mach...</div>
<div style="position:absolute;top:440.64px;font-family:'Liberation Sans', sans-serif;font-size:12px;line-height:12px;color:#ffffff;white-space:nowrap;font-weight:700;left:1533px;transform-origin:0 50%;transform:scaleX(0.9300);text-shadow:1px 1px 2px rgba(0,0,0,0.45);">X</div>
<div style="position:absolute;left:1578px;top:410px;width:36px;height:44px;background:#d9d9d9;box-shadow:inset 0 0 0 0.5px rgba(0,0,0,0.25);"></div>
<div style="position:absolute;top:417.04px;font-family:'Liberation Sans', sans-serif;font-size:12px;line-height:12px;color:#ffffff;white-space:nowrap;font-weight:700;left:1583px;transform-origin:0 50%;transform:scaleX(0.9300);text-shadow:1px 1px 2px rgba(0,0,0,0.45);">On...</div>
<div style="position:absolute;left:1614px;top:410px;width:34px;height:44px;background:#ffe600;box-shadow:inset 0 0 0 0.5px rgba(0,0,0,0.25);"></div>
<div style="position:absolute;top:417.04px;font-family:'Liberation Sans', sans-serif;font-size:12px;line-height:12px;color:#ffffff;white-space:nowrap;font-weight:700;left:1619px;transform-origin:0 50%;transform:scaleX(0.9300);text-shadow:1px 1px 2px rgba(0,0,0,0.45);">Re...</div>
<div style="position:absolute;top:428.84px;font-family:'Liberation Sans', sans-serif;font-size:12px;line-height:12px;color:#ffffff;white-space:nowrap;font-weight:700;left:1619px;transform-origin:0 50%;transform:scaleX(0.9300);text-shadow:1px 1px 2px rgba(0,0,0,0.45);">ca...</div>
<div style="position:absolute;left:1528px;top:454px;width:45px;height:32px;background:#ffe600;box-shadow:inset 0 0 0 0.5px rgba(0,0,0,0.25);"></div>
<div style="position:absolute;top:461.04px;font-family:'Liberation Sans', sans-serif;font-size:12px;line-height:12px;color:#ffffff;white-space:nowrap;font-weight:700;left:1533px;transform-origin:0 50%;transform:scaleX(0.9300);text-shadow:1px 1px 2px rgba(0,0,0,0.45);">Edit...</div>
<div style="position:absolute;top:472.84px;font-family:'Liberation Sans', sans-serif;font-size:12px;line-height:12px;color:#ffffff;white-space:nowrap;font-weight:700;left:1533px;transform-origin:0 50%;transform:scaleX(0.9300);text-shadow:1px 1px 2px rgba(0,0,0,0.45);">Cale...</div>
<div style="position:absolute;left:1573px;top:454px;width:38px;height:32px;background:#36a4dd;box-shadow:inset 0 0 0 0.5px rgba(0,0,0,0.25);"></div>
<div style="position:absolute;top:461.04px;font-family:'Liberation Sans', sans-serif;font-size:12px;line-height:12px;color:#ffffff;white-space:nowrap;font-weight:700;left:1578px;transform-origin:0 50%;transform:scaleX(0.9300);text-shadow:1px 1px 2px rgba(0,0,0,0.45);">Tec...</div>
<div style="position:absolute;top:472.84px;font-family:'Liberation Sans', sans-serif;font-size:12px;line-height:12px;color:#ffffff;white-space:nowrap;font-weight:700;left:1578px;transform-origin:0 50%;transform:scaleX(0.9300);text-shadow:1px 1px 2px rgba(0,0,0,0.45);">Re...</div>
<div style="position:absolute;left:1611px;top:454px;width:37px;height:32px;background:#333333;box-shadow:inset 0 0 0 0.5px rgba(0,0,0,0.25);"></div>
<div style="position:absolute;top:461.04px;font-family:'Liberation Sans', sans-serif;font-size:12px;line-height:12px;color:#ffffff;white-space:nowrap;font-weight:700;left:1616px;transform-origin:0 50%;transform:scaleX(0.9300);text-shadow:1px 1px 2px rgba(0,0,0,0.45);">Pr...</div>
<div style="position:absolute;top:472.84px;font-family:'Liberation Sans', sans-serif;font-size:12px;line-height:12px;color:#ffffff;white-space:nowrap;font-weight:700;left:1616px;transform-origin:0 50%;transform:scaleX(0.9300);text-shadow:1px 1px 2px rgba(0,0,0,0.45);">Fac...</div>
<div style="position:absolute;left:1528px;top:486px;width:37px;height:32px;background:#ee00c8;box-shadow:inset 0 0 0 0.5px rgba(0,0,0,0.25);"></div>
<div style="position:absolute;top:493.04px;font-family:'Liberation Sans', sans-serif;font-size:12px;line-height:12px;color:#ffffff;white-space:nowrap;font-weight:700;left:1533px;transform-origin:0 50%;transform:scaleX(0.9300);text-shadow:1px 1px 2px rgba(0,0,0,0.45);">Pro...</div>
<div style="position:absolute;top:504.84px;font-family:'Liberation Sans', sans-serif;font-size:12px;line-height:12px;color:#ffffff;white-space:nowrap;font-weight:700;left:1533px;transform-origin:0 50%;transform:scaleX(0.9300);text-shadow:1px 1px 2px rgba(0,0,0,0.45);">Cat...</div>
<div style="position:absolute;left:1528px;top:518px;width:37px;height:32px;background:#ff8000;box-shadow:inset 0 0 0 0.5px rgba(0,0,0,0.25);"></div>
<div style="position:absolute;top:525.04px;font-family:'Liberation Sans', sans-serif;font-size:12px;line-height:12px;color:#ffffff;white-space:nowrap;font-weight:700;left:1533px;transform-origin:0 50%;transform:scaleX(0.9300);text-shadow:1px 1px 2px rgba(0,0,0,0.45);">Pro...</div>
<div style="position:absolute;top:536.84px;font-family:'Liberation Sans', sans-serif;font-size:12px;line-height:12px;color:#ffffff;white-space:nowrap;font-weight:700;left:1533px;transform-origin:0 50%;transform:scaleX(0.9300);text-shadow:1px 1px 2px rgba(0,0,0,0.45);">Co...</div>
<div style="position:absolute;left:1528px;top:550px;width:37px;height:26px;background:#6d6d6d;box-shadow:inset 0 0 0 0.5px rgba(0,0,0,0.25);"></div>
<div style="position:absolute;top:557.04px;font-family:'Liberation Sans', sans-serif;font-size:12px;line-height:12px;color:#ffffff;white-space:nowrap;font-weight:700;left:1533px;transform-origin:0 50%;transform:scaleX(0.9300);text-shadow:1px 1px 2px rgba(0,0,0,0.45);">Me...</div>
<div style="position:absolute;left:1565px;top:486px;width:29px;height:32px;background:#444444;box-shadow:inset 0 0 0 0.5px rgba(0,0,0,0.25);"></div>
<div style="position:absolute;top:493.04px;font-family:'Liberation Sans', sans-serif;font-size:12px;line-height:12px;color:#ffffff;white-space:nowrap;font-weight:700;left:1570px;transform-origin:0 50%;transform:scaleX(0.9300);text-shadow:1px 1px 2px rgba(0,0,0,0.45);">C...</div>
<div style="position:absolute;top:504.84px;font-family:'Liberation Sans', sans-serif;font-size:12px;line-height:12px;color:#ffffff;white-space:nowrap;font-weight:700;left:1570px;transform-origin:0 50%;transform:scaleX(0.9300);text-shadow:1px 1px 2px rgba(0,0,0,0.45);">C...</div>
<div style="position:absolute;left:1565px;top:518px;width:29px;height:29px;background:#222222;box-shadow:inset 0 0 0 0.5px rgba(0,0,0,0.25);"></div>
<div style="position:absolute;top:525.04px;font-family:'Liberation Sans', sans-serif;font-size:12px;line-height:12px;color:#ffffff;white-space:nowrap;font-weight:700;left:1570px;transform-origin:0 50%;transform:scaleX(0.9300);text-shadow:1px 1px 2px rgba(0,0,0,0.45);">P...</div>
<div style="position:absolute;top:536.84px;font-family:'Liberation Sans', sans-serif;font-size:12px;line-height:12px;color:#ffffff;white-space:nowrap;font-weight:700;left:1570px;transform-origin:0 50%;transform:scaleX(0.9300);text-shadow:1px 1px 2px rgba(0,0,0,0.45);">Kit</div>
<div style="position:absolute;left:1565px;top:547px;width:29px;height:29px;background:#333333;box-shadow:inset 0 0 0 0.5px rgba(0,0,0,0.25);"></div>
<div style="position:absolute;top:554.04px;font-family:'Liberation Sans', sans-serif;font-size:12px;line-height:12px;color:#ffffff;white-space:nowrap;font-weight:700;left:1570px;transform-origin:0 50%;transform:scaleX(0.9300);text-shadow:1px 1px 2px rgba(0,0,0,0.45);">B...</div>
<div style="position:absolute;top:565.84px;font-family:'Liberation Sans', sans-serif;font-size:12px;line-height:12px;color:#ffffff;white-space:nowrap;font-weight:700;left:1570px;transform-origin:0 50%;transform:scaleX(0.9300);text-shadow:1px 1px 2px rgba(0,0,0,0.45);">R...</div>
<div style="position:absolute;left:1594px;top:486px;width:27px;height:32px;background:#0074b0;box-shadow:inset 0 0 0 0.5px rgba(0,0,0,0.25);"></div>
<div style="position:absolute;top:493.04px;font-family:'Liberation Sans', sans-serif;font-size:12px;line-height:12px;color:#ffffff;white-space:nowrap;font-weight:700;left:1599px;transform-origin:0 50%;transform:scaleX(0.9300);text-shadow:1px 1px 2px rgba(0,0,0,0.45);">S...</div>
<div style="position:absolute;top:504.84px;font-family:'Liberation Sans', sans-serif;font-size:12px;line-height:12px;color:#ffffff;white-space:nowrap;font-weight:700;left:1599px;transform-origin:0 50%;transform:scaleX(0.9300);text-shadow:1px 1px 2px rgba(0,0,0,0.45);">P...</div>
<div style="position:absolute;left:1621px;top:486px;width:27px;height:32px;background:#6d6d6d;box-shadow:inset 0 0 0 0.5px rgba(0,0,0,0.25);"></div>
<div style="position:absolute;top:493.04px;font-family:'Liberation Sans', sans-serif;font-size:12px;line-height:12px;color:#ffffff;white-space:nowrap;font-weight:700;left:1626px;transform-origin:0 50%;transform:scaleX(0.9300);text-shadow:1px 1px 2px rgba(0,0,0,0.45);">P...</div>
<div style="position:absolute;top:504.84px;font-family:'Liberation Sans', sans-serif;font-size:12px;line-height:12px;color:#ffffff;white-space:nowrap;font-weight:700;left:1626px;transform-origin:0 50%;transform:scaleX(0.9300);text-shadow:1px 1px 2px rgba(0,0,0,0.45);">R...</div>
<div style="position:absolute;left:1594px;top:518px;width:27px;height:26px;background:#9a9a9a;box-shadow:inset 0 0 0 0.5px rgba(0,0,0,0.25);"></div>
<div style="position:absolute;top:525.04px;font-family:'Liberation Sans', sans-serif;font-size:12px;line-height:12px;color:#ffffff;white-space:nowrap;font-weight:700;left:1599px;transform-origin:0 50%;transform:scaleX(0.9300);text-shadow:1px 1px 2px rgba(0,0,0,0.45);">V...</div>
<div style="position:absolute;left:1621px;top:518px;width:27px;height:26px;background:#6d6d6d;box-shadow:inset 0 0 0 0.5px rgba(0,0,0,0.25);"></div>
<div style="position:absolute;top:525.04px;font-family:'Liberation Sans', sans-serif;font-size:12px;line-height:12px;color:#ffffff;white-space:nowrap;font-weight:700;left:1626px;transform-origin:0 50%;transform:scaleX(0.9300);text-shadow:1px 1px 2px rgba(0,0,0,0.45);">V...</div>
<div style="position:absolute;left:1594px;top:544px;width:27px;height:18px;background:#36a4dd;box-shadow:inset 0 0 0 0.5px rgba(0,0,0,0.25);"></div>
<div style="position:absolute;top:551.04px;font-family:'Liberation Sans', sans-serif;font-size:12px;line-height:12px;color:#ffffff;white-space:nowrap;font-weight:700;left:1599px;transform-origin:0 50%;transform:scaleX(0.9300);text-shadow:1px 1px 2px rgba(0,0,0,0.45);">...</div>
<div style="position:absolute;left:1594px;top:562px;width:27px;height:14px;background:#c8c8c8;box-shadow:inset 0 0 0 0.5px rgba(0,0,0,0.25);"></div>
<div style="position:absolute;left:1621px;top:544px;width:17px;height:22px;background:#0893d8;box-shadow:inset 0 0 0 0.5px rgba(0,0,0,0.25);"></div>
<div style="position:absolute;left:1621px;top:566px;width:17px;height:10px;background:#9a9a9a;box-shadow:inset 0 0 0 0.5px rgba(0,0,0,0.25);"></div>
<div style="position:absolute;left:1638px;top:544px;width:10px;height:22px;background:#d1002f;box-shadow:inset 0 0 0 0.5px rgba(0,0,0,0.25);"></div>
<div style="position:absolute;left:1638px;top:566px;width:10px;height:10px;background:#6d6d6d;box-shadow:inset 0 0 0 0.5px rgba(0,0,0,0.25);"></div>
<div style="position:absolute;left:1329.2px;top:286px;width:319px;height:1px;background:#a0a0a0;"></div>
<div style="position:absolute;left:1655.6px;top:252.4px;width:249.1px;height:113.79999999999998px;background:#ffffff;border-radius:5px;"></div>
<div style="position:absolute;top:289.52px;font-family:'Liberation Sans', sans-serif;font-size:21px;line-height:21px;color:#474747;white-space:nowrap;left:1779.8px;transform:translateX(-50%) scaleX(0.9400);-webkit-text-stroke:0.3px #fff;">30,1Tsd.</div>
<div style="position:absolute;top:319.64px;font-family:'Liberation Sans', sans-serif;font-size:12px;line-height:12px;color:#9b9b9b;white-space:nowrap;left:1779.8px;transform:translateX(-50%) scaleX(0.9700);">Aufwand (Stunden)</div>
<div style="position:absolute;left:1655.6px;top:374.2px;width:249.1px;height:83.30000000000001px;background:#ffffff;border-radius:5px;"></div>
<div style="position:absolute;top:396.02px;font-family:'Liberation Sans', sans-serif;font-size:21px;line-height:21px;color:#474747;white-space:nowrap;left:1779.8px;transform:translateX(-50%) scaleX(0.9400);-webkit-text-stroke:0.3px #fff;">2,57Tsd.</div>
<div style="position:absolute;top:425.44px;font-family:'Liberation Sans', sans-serif;font-size:12px;line-height:12px;color:#9b9b9b;white-space:nowrap;left:1779.8px;transform:translateX(-50%) scaleX(0.9700);">Aufwand abgeschlossen (...</div>
<div style="position:absolute;left:1655.6px;top:464.4px;width:249.1px;height:111.80000000000007px;background:#ffffff;border-radius:5px;"></div>
<div style="position:absolute;top:501.12px;font-family:'Liberation Sans', sans-serif;font-size:21px;line-height:21px;color:#474747;white-space:nowrap;left:1779.8px;transform:translateX(-50%) scaleX(0.9400);-webkit-text-stroke:0.3px #fff;">27,5Tsd.</div>
<div style="position:absolute;top:530.64px;font-family:'Liberation Sans', sans-serif;font-size:12px;line-height:12px;color:#9b9b9b;white-space:nowrap;left:1779.8px;transform:translateX(-50%) scaleX(0.9700);">Aufwand verbleibend (Stu...</div>
<div style="position:absolute;left:183px;top:583px;width:1722px;height:360px;background:#ffffff;"></div>
<div style="position:absolute;left:185px;top:583px;width:1px;height:360px;background:#d6d6d6;"></div>
<div style="position:absolute;left:1903px;top:583px;width:1px;height:360px;background:#d6d6d6;"></div>
<div style="position:absolute;left:185px;top:616px;width:1718px;height:2px;background:#dddddd;"></div>
<div style="position:absolute;left:323px;top:583px;width:1px;height:360px;background:#dedede;"></div>
<div style="position:absolute;left:757px;top:583px;width:1px;height:360px;background:#dedede;"></div>
<div style="position:absolute;left:948px;top:583px;width:1px;height:360px;background:#dedede;"></div>
<div style="position:absolute;left:1139px;top:583px;width:1px;height:360px;background:#dedede;"></div>
<div style="position:absolute;left:1330px;top:583px;width:1px;height:360px;background:#dedede;"></div>
<div style="position:absolute;left:1521px;top:583px;width:1px;height:360px;background:#dedede;"></div>
<div style="position:absolute;left:1712px;top:583px;width:1px;height:360px;background:#dedede;"></div>
<div style="position:absolute;top:592.84px;font-family:'Liberation Sans', sans-serif;font-size:12px;line-height:12px;color:#737373;white-space:nowrap;left:193px;transform-origin:0 50%;transform:scaleX(0.8500);">KPI</div>
<div style="position:absolute;top:592.84px;font-family:'Liberation Sans', sans-serif;font-size:12px;line-height:12px;color:#737373;white-space:nowrap;left:331px;transform-origin:0 50%;transform:scaleX(1.0800);">Aufgabe</div>
<div style="position:absolute;top:592.84px;font-family:'Liberation Sans', sans-serif;font-size:12px;line-height:12px;color:#737373;white-space:nowrap;left:764.8px;transform-origin:0 50%;transform:scaleX(1.0450);">Effektiver Start</div>
<div style="position:absolute;top:592.84px;font-family:'Liberation Sans', sans-serif;font-size:12px;line-height:12px;color:#737373;white-space:nowrap;left:955.5px;transform-origin:0 50%;transform:scaleX(1.0200);">Effektives Ende</div>
<div style="position:absolute;top:592.84px;font-family:'Liberation Sans', sans-serif;font-size:12px;line-height:12px;color:#737373;white-space:nowrap;left:1146.5px;transform-origin:0 50%;transform:scaleX(1.0800);">Status</div>
<div style="position:absolute;top:592.84px;font-family:'Liberation Sans', sans-serif;font-size:12px;line-height:12px;color:#737373;white-space:nowrap;left:1337.5px;transform-origin:0 50%;transform:scaleX(1.0800);">Zugewiesen an</div>
<div style="position:absolute;top:592.84px;font-family:'Liberation Sans', sans-serif;font-size:12px;line-height:12px;color:#737373;white-space:nowrap;right:215.5999999999999px;transform-origin:100% 50%;transform:scaleX(1.0950);">Aufwand (Stunden)</div>
<div style="position:absolute;top:592.84px;font-family:'Liberation Sans', sans-serif;font-size:12px;line-height:12px;color:#737373;white-space:nowrap;left:1762px;transform-origin:0 50%;transform:scaleX(1.0800);">Zeit gebucht</div>
<svg style="position:absolute;left:929px;top:590px;" width="8" height="15" viewBox="0 0 8 15"><line x1="4" y1="0.8" x2="4" y2="13" stroke="#6f7276" stroke-width="1"/><polygon points="1.6,11 6.4,11 4,14" fill="#555"/></svg>
<div style="position:absolute;left:1820.3px;top:582px;width:86.3px;height:37.7px;background:#ffffff;border-radius:3px;box-shadow:0 1px 3px rgba(0,0,0,0.12);"></div>
<svg style="position:absolute;left:1830.5px;top:590.2px;" width="17" height="18" viewBox="0 0 17 18"><path d="M5 6.5 H1.5 V16.5 H15.5 V6.5 H12" fill="none" stroke="#6b6b6b" stroke-width="1.9"/><line x1="8.5" y1="3" x2="8.5" y2="11.5" stroke="#6b6b6b" stroke-width="1.9"/><polygon points="8.5,0.3 4.6,4.6 12.4,4.6" fill="#6b6b6b"/></svg>
<svg style="position:absolute;left:1864px;top:593.3px;" width="15" height="15" viewBox="0 0 15 15"><g fill="#6b6b6b"><polygon points="0.3,0.3 4.6,0.3 3.1,1.8 4.9,3.6 3.6,4.9 1.8,3.1 0.3,4.6"/><polygon points="13.7,0.3 9.4,0.3 10.9,1.8 9.1,3.6 10.4,4.9 12.2,3.1 13.7,4.6"/><polygon points="0.3,13.7 4.6,13.7 3.1,12.2 4.9,10.4 3.6,9.1 1.8,10.9 0.3,9.4"/><polygon points="13.7,13.7 9.4,13.7 10.9,12.2 9.1,10.4 10.4,9.1 12.2,10.9 13.7,9.4"/></g></svg>
<div style="position:absolute;top:628.24px;font-family:'Liberation Sans', sans-serif;font-size:12px;line-height:12px;color:#333333;white-space:nowrap;left:193px;transform-origin:0 50%;transform:scaleX(1.1200);">planmäßig</div>
<div style="position:absolute;top:628.24px;font-family:'Liberation Sans', sans-serif;font-size:12px;line-height:12px;color:#2e6fbf;white-space:nowrap;left:331px;transform-origin:0 50%;transform:scaleX(1.0970);">Potential for improvement</div>
<div style="position:absolute;top:628.24px;font-family:'Liberation Sans', sans-serif;font-size:12px;line-height:12px;color:#333333;white-space:nowrap;left:764.8px;transform-origin:0 50%;transform:scaleX(0.9500);">16.9.2025</div>
<div style="position:absolute;top:628.24px;font-family:'Liberation Sans', sans-serif;font-size:12px;line-height:12px;color:#333333;white-space:nowrap;left:955.5px;transform-origin:0 50%;transform:scaleX(0.9500);">18.9.2025</div>
<div style="position:absolute;top:628.24px;font-family:'Liberation Sans', sans-serif;font-size:12px;line-height:12px;color:#333333;white-space:nowrap;left:1146.5px;transform-origin:0 50%;transform:scaleX(1.0900);">To do</div>
<div style="position:absolute;top:628.24px;font-family:'Liberation Sans', sans-serif;font-size:12px;line-height:12px;color:#2e6fbf;white-space:nowrap;left:1337.5px;transform-origin:0 50%;transform:scaleX(1.0600);">Carol Walker</div>
<div style="position:absolute;top:628.24px;font-family:'Liberation Sans', sans-serif;font-size:12px;line-height:12px;color:#333333;white-space:nowrap;right:215.5999999999999px;">4</div>
<div style="position:absolute;top:628.24px;font-family:'Liberation Sans', sans-serif;font-size:12px;line-height:12px;color:#333333;white-space:nowrap;right:25px;">0</div>
<div style="position:absolute;top:660.14px;font-family:'Liberation Sans', sans-serif;font-size:12px;line-height:12px;color:#333333;white-space:nowrap;left:193px;transform-origin:0 50%;transform:scaleX(1.1200);">planmäßig</div>
<div style="position:absolute;top:660.14px;font-family:'Liberation Sans', sans-serif;font-size:12px;line-height:12px;color:#2e6fbf;white-space:nowrap;left:331px;transform-origin:0 50%;transform:scaleX(1.0970);">Get feedback from the customers</div>
<div style="position:absolute;top:660.14px;font-family:'Liberation Sans', sans-serif;font-size:12px;line-height:12px;color:#333333;white-space:nowrap;left:764.8px;transform-origin:0 50%;transform:scaleX(0.9500);">16.9.2025</div>
<div style="position:absolute;top:660.14px;font-family:'Liberation Sans', sans-serif;font-size:12px;line-height:12px;color:#333333;white-space:nowrap;left:955.5px;transform-origin:0 50%;transform:scaleX(0.9500);">18.9.2025</div>
<div style="position:absolute;top:660.14px;font-family:'Liberation Sans', sans-serif;font-size:12px;line-height:12px;color:#333333;white-space:nowrap;left:1146.5px;transform-origin:0 50%;transform:scaleX(1.0900);">To do</div>
<div style="position:absolute;top:660.14px;font-family:'Liberation Sans', sans-serif;font-size:12px;line-height:12px;color:#333333;white-space:nowrap;right:215.5999999999999px;">4</div>
<div style="position:absolute;top:660.14px;font-family:'Liberation Sans', sans-serif;font-size:12px;line-height:12px;color:#333333;white-space:nowrap;right:25px;">0</div>
<div style="position:absolute;top:692.04px;font-family:'Liberation Sans', sans-serif;font-size:12px;line-height:12px;color:#333333;white-space:nowrap;left:193px;transform-origin:0 50%;transform:scaleX(1.1200);">planmäßig</div>
<div style="position:absolute;top:692.04px;font-family:'Liberation Sans', sans-serif;font-size:12px;line-height:12px;color:#2e6fbf;white-space:nowrap;left:331px;transform-origin:0 50%;transform:scaleX(1.0970);">Measure image enhancement</div>
<div style="position:absolute;top:692.04px;font-family:'Liberation Sans', sans-serif;font-size:12px;line-height:12px;color:#333333;white-space:nowrap;left:764.8px;transform-origin:0 50%;transform:scaleX(0.9500);">16.9.2025</div>
<div style="position:absolute;top:692.04px;font-family:'Liberation Sans', sans-serif;font-size:12px;line-height:12px;color:#333333;white-space:nowrap;left:955.5px;transform-origin:0 50%;transform:scaleX(0.9500);">18.9.2025</div>
<div style="position:absolute;top:692.04px;font-family:'Liberation Sans', sans-serif;font-size:12px;line-height:12px;color:#333333;white-space:nowrap;left:1146.5px;transform-origin:0 50%;transform:scaleX(1.0900);">To do</div>
<div style="position:absolute;top:692.04px;font-family:'Liberation Sans', sans-serif;font-size:12px;line-height:12px;color:#333333;white-space:nowrap;right:215.5999999999999px;">8</div>
<div style="position:absolute;top:692.04px;font-family:'Liberation Sans', sans-serif;font-size:12px;line-height:12px;color:#333333;white-space:nowrap;right:25px;">0</div>
<div style="position:absolute;top:725.14px;font-family:'Liberation Sans', sans-serif;font-size:12px;line-height:12px;color:#333333;white-space:nowrap;left:193px;transform-origin:0 50%;transform:scaleX(1.1200);">planmäßig</div>
<div style="position:absolute;top:725.14px;font-family:'Liberation Sans', sans-serif;font-size:12px;line-height:12px;color:#2e6fbf;white-space:nowrap;left:331px;transform-origin:0 50%;transform:scaleX(1.0970);">Measure awareness creation</div>
<div style="position:absolute;top:725.14px;font-family:'Liberation Sans', sans-serif;font-size:12px;line-height:12px;color:#333333;white-space:nowrap;left:764.8px;transform-origin:0 50%;transform:scaleX(0.9500);">16.9.2025</div>
<div style="position:absolute;top:725.14px;font-family:'Liberation Sans', sans-serif;font-size:12px;line-height:12px;color:#333333;white-space:nowrap;left:955.5px;transform-origin:0 50%;transform:scaleX(0.9500);">18.9.2025</div>
<div style="position:absolute;top:725.14px;font-family:'Liberation Sans', sans-serif;font-size:12px;line-height:12px;color:#333333;white-space:nowrap;left:1146.5px;transform-origin:0 50%;transform:scaleX(1.0900);">To do</div>
<div style="position:absolute;top:725.14px;font-family:'Liberation Sans', sans-serif;font-size:12px;line-height:12px;color:#2e6fbf;white-space:nowrap;left:1337.5px;transform-origin:0 50%;transform:scaleX(1.0600);">Karen McCarty</div>
<div style="position:absolute;top:725.14px;font-family:'Liberation Sans', sans-serif;font-size:12px;line-height:12px;color:#333333;white-space:nowrap;right:215.5999999999999px;">8</div>
<div style="position:absolute;top:725.14px;font-family:'Liberation Sans', sans-serif;font-size:12px;line-height:12px;color:#333333;white-space:nowrap;right:25px;">0</div>
<div style="position:absolute;top:757.04px;font-family:'Liberation Sans', sans-serif;font-size:12px;line-height:12px;color:#333333;white-space:nowrap;left:193px;transform-origin:0 50%;transform:scaleX(1.1200);">planmäßig</div>
<div style="position:absolute;top:757.04px;font-family:'Liberation Sans', sans-serif;font-size:12px;line-height:12px;color:#2e6fbf;white-space:nowrap;left:331px;transform-origin:0 50%;transform:scaleX(1.0970);">Dismantling (stand Builder)</div>
<div style="position:absolute;top:757.04px;font-family:'Liberation Sans', sans-serif;font-size:12px;line-height:12px;color:#333333;white-space:nowrap;left:764.8px;transform-origin:0 50%;transform:scaleX(0.9500);">16.9.2025</div>
<div style="position:absolute;top:757.04px;font-family:'Liberation Sans', sans-serif;font-size:12px;line-height:12px;color:#333333;white-space:nowrap;left:955.5px;transform-origin:0 50%;transform:scaleX(0.9500);">16.9.2025</div>
<div style="position:absolute;top:757.04px;font-family:'Liberation Sans', sans-serif;font-size:12px;line-height:12px;color:#333333;white-space:nowrap;left:1146.5px;transform-origin:0 50%;transform:scaleX(1.0900);">To do</div>
<div style="position:absolute;top:757.04px;font-family:'Liberation Sans', sans-serif;font-size:12px;line-height:12px;color:#2e6fbf;white-space:nowrap;left:1337.5px;transform-origin:0 50%;transform:scaleX(1.0600);">Bryan Greer</div>
<div style="position:absolute;top:757.04px;font-family:'Liberation Sans', sans-serif;font-size:12px;line-height:12px;color:#333333;white-space:nowrap;right:215.5999999999999px;">4</div>
<div style="position:absolute;top:757.04px;font-family:'Liberation Sans', sans-serif;font-size:12px;line-height:12px;color:#333333;white-space:nowrap;right:25px;">0</div>
<div style="position:absolute;top:789.44px;font-family:'Liberation Sans', sans-serif;font-size:12px;line-height:12px;color:#333333;white-space:nowrap;left:193px;transform-origin:0 50%;transform:scaleX(1.1200);">planmäßig</div>
<div style="position:absolute;top:789.44px;font-family:'Liberation Sans', sans-serif;font-size:12px;line-height:12px;color:#2e6fbf;white-space:nowrap;left:331px;transform-origin:0 50%;transform:scaleX(1.0970);">Equipment clear out and Pack</div>
<div style="position:absolute;top:789.44px;font-family:'Liberation Sans', sans-serif;font-size:12px;line-height:12px;color:#333333;white-space:nowrap;left:764.8px;transform-origin:0 50%;transform:scaleX(0.9500);">16.9.2025</div>
<div style="position:absolute;top:789.44px;font-family:'Liberation Sans', sans-serif;font-size:12px;line-height:12px;color:#333333;white-space:nowrap;left:955.5px;transform-origin:0 50%;transform:scaleX(0.9500);">16.9.2025</div>
<div style="position:absolute;top:789.44px;font-family:'Liberation Sans', sans-serif;font-size:12px;line-height:12px;color:#333333;white-space:nowrap;left:1146.5px;transform-origin:0 50%;transform:scaleX(1.0900);">To do</div>
<div style="position:absolute;top:789.44px;font-family:'Liberation Sans', sans-serif;font-size:12px;line-height:12px;color:#333333;white-space:nowrap;right:215.5999999999999px;">3</div>
<div style="position:absolute;top:789.44px;font-family:'Liberation Sans', sans-serif;font-size:12px;line-height:12px;color:#333333;white-space:nowrap;right:25px;">0</div>
<div style="position:absolute;top:821.14px;font-family:'Liberation Sans', sans-serif;font-size:12px;line-height:12px;color:#333333;white-space:nowrap;left:193px;transform-origin:0 50%;transform:scaleX(1.1200);">planmäßig</div>
<div style="position:absolute;top:821.14px;font-family:'Liberation Sans', sans-serif;font-size:12px;line-height:12px;color:#2e6fbf;white-space:nowrap;left:331px;transform-origin:0 50%;transform:scaleX(1.0970);">Journey home stand personnel</div>
<div style="position:absolute;top:821.14px;font-family:'Liberation Sans', sans-serif;font-size:12px;line-height:12px;color:#333333;white-space:nowrap;left:764.8px;transform-origin:0 50%;transform:scaleX(0.9500);">16.9.2025</div>
<div style="position:absolute;top:821.14px;font-family:'Liberation Sans', sans-serif;font-size:12px;line-height:12px;color:#333333;white-space:nowrap;left:955.5px;transform-origin:0 50%;transform:scaleX(0.9500);">16.9.2025</div>
<div style="position:absolute;top:821.14px;font-family:'Liberation Sans', sans-serif;font-size:12px;line-height:12px;color:#333333;white-space:nowrap;left:1146.5px;transform-origin:0 50%;transform:scaleX(1.0900);">To do</div>
<div style="position:absolute;top:821.14px;font-family:'Liberation Sans', sans-serif;font-size:12px;line-height:12px;color:#333333;white-space:nowrap;right:215.5999999999999px;">2</div>
<div style="position:absolute;top:821.14px;font-family:'Liberation Sans', sans-serif;font-size:12px;line-height:12px;color:#333333;white-space:nowrap;right:25px;">0</div>
<div style="position:absolute;top:854.44px;font-family:'Liberation Sans', sans-serif;font-size:12px;line-height:12px;color:#333333;white-space:nowrap;left:193px;transform-origin:0 50%;transform:scaleX(1.1200);">planmäßig</div>
<div style="position:absolute;top:854.44px;font-family:'Liberation Sans', sans-serif;font-size:12px;line-height:12px;color:#2e6fbf;white-space:nowrap;left:331px;transform-origin:0 50%;transform:scaleX(1.0970);">Lead evaluation</div>
<div style="position:absolute;top:854.44px;font-family:'Liberation Sans', sans-serif;font-size:12px;line-height:12px;color:#333333;white-space:nowrap;left:764.8px;transform-origin:0 50%;transform:scaleX(0.9500);">16.9.2025</div>
<div style="position:absolute;top:854.44px;font-family:'Liberation Sans', sans-serif;font-size:12px;line-height:12px;color:#333333;white-space:nowrap;left:955.5px;transform-origin:0 50%;transform:scaleX(0.9500);">16.9.2025</div>
<div style="position:absolute;top:854.44px;font-family:'Liberation Sans', sans-serif;font-size:12px;line-height:12px;color:#333333;white-space:nowrap;left:1146.5px;transform-origin:0 50%;transform:scaleX(1.0900);">To do</div>
<div style="position:absolute;top:854.44px;font-family:'Liberation Sans', sans-serif;font-size:12px;line-height:12px;color:#2e6fbf;white-space:nowrap;left:1337.5px;transform-origin:0 50%;transform:scaleX(1.0600);">Carol Walker</div>
<div style="position:absolute;top:854.44px;font-family:'Liberation Sans', sans-serif;font-size:12px;line-height:12px;color:#333333;white-space:nowrap;right:215.5999999999999px;">3</div>
<div style="position:absolute;top:854.44px;font-family:'Liberation Sans', sans-serif;font-size:12px;line-height:12px;color:#333333;white-space:nowrap;right:25px;">0</div>
<div style="position:absolute;top:886.14px;font-family:'Liberation Sans', sans-serif;font-size:12px;line-height:12px;color:#333333;white-space:nowrap;left:193px;transform-origin:0 50%;transform:scaleX(1.1200);">erledigt</div>
<div style="position:absolute;top:886.14px;font-family:'Liberation Sans', sans-serif;font-size:12px;line-height:12px;color:#2e6fbf;white-space:nowrap;left:331px;transform-origin:0 50%;transform:scaleX(1.0970);">Complete lead capture</div>
<div style="position:absolute;top:886.14px;font-family:'Liberation Sans', sans-serif;font-size:12px;line-height:12px;color:#333333;white-space:nowrap;left:764.8px;transform-origin:0 50%;transform:scaleX(0.9500);">16.9.2025</div>
<div style="position:absolute;top:886.14px;font-family:'Liberation Sans', sans-serif;font-size:12px;line-height:12px;color:#333333;white-space:nowrap;left:955.5px;transform-origin:0 50%;transform:scaleX(0.9500);">16.9.2025</div>
<div style="position:absolute;top:886.14px;font-family:'Liberation Sans', sans-serif;font-size:12px;line-height:12px;color:#333333;white-space:nowrap;left:1146.5px;transform-origin:0 50%;transform:scaleX(1.0900);">Done</div>
<div style="position:absolute;top:886.14px;font-family:'Liberation Sans', sans-serif;font-size:12px;line-height:12px;color:#2e6fbf;white-space:nowrap;left:1337.5px;transform-origin:0 50%;transform:scaleX(1.0600);">Jason Miller</div>
<div style="position:absolute;top:886.14px;font-family:'Liberation Sans', sans-serif;font-size:12px;line-height:12px;color:#333333;white-space:nowrap;right:215.5999999999999px;">2</div>
<div style="position:absolute;top:886.14px;font-family:'Liberation Sans', sans-serif;font-size:12px;line-height:12px;color:#333333;white-space:nowrap;right:25px;">0</div>
<div style="position:absolute;top:918.44px;font-family:'Liberation Sans', sans-serif;font-size:12px;line-height:12px;color:#333333;white-space:nowrap;left:193px;transform-origin:0 50%;transform:scaleX(1.1200);">planmäßig</div>
<div style="position:absolute;top:918.44px;font-family:'Liberation Sans', sans-serif;font-size:12px;line-height:12px;color:#2e6fbf;white-space:nowrap;left:331px;transform-origin:0 50%;transform:scaleX(1.0970);">Pick up rented objects</div>
<div style="position:absolute;top:918.44px;font-family:'Liberation Sans', sans-serif;font-size:12px;line-height:12px;color:#333333;white-space:nowrap;left:764.8px;transform-origin:0 50%;transform:scaleX(0.9500);">16.9.2025</div>
<div style="position:absolute;top:918.44px;font-family:'Liberation Sans', sans-serif;font-size:12px;line-height:12px;color:#333333;white-space:nowrap;left:955.5px;transform-origin:0 50%;transform:scaleX(0.9500);">16.9.2025</div>
<div style="position:absolute;top:918.44px;font-family:'Liberation Sans', sans-serif;font-size:12px;line-height:12px;color:#333333;white-space:nowrap;left:1146.5px;transform-origin:0 50%;transform:scaleX(1.0900);">To do</div>
<div style="position:absolute;top:918.44px;font-family:'Liberation Sans', sans-serif;font-size:12px;line-height:12px;color:#333333;white-space:nowrap;right:215.5999999999999px;">1</div>
<div style="position:absolute;top:918.44px;font-family:'Liberation Sans', sans-serif;font-size:12px;line-height:12px;color:#333333;white-space:nowrap;right:25px;">0</div>
<svg style="position:absolute;left:300px;top:884px;" width="17" height="17" viewBox="0 0 17 17"><circle cx="8.2" cy="8.2" r="8" fill="#7cb83c"/><polyline points="4.3,8.6 7,11.2 12.3,5.6" fill="none" stroke="#fff" stroke-width="2"/></svg>
</body></html>
